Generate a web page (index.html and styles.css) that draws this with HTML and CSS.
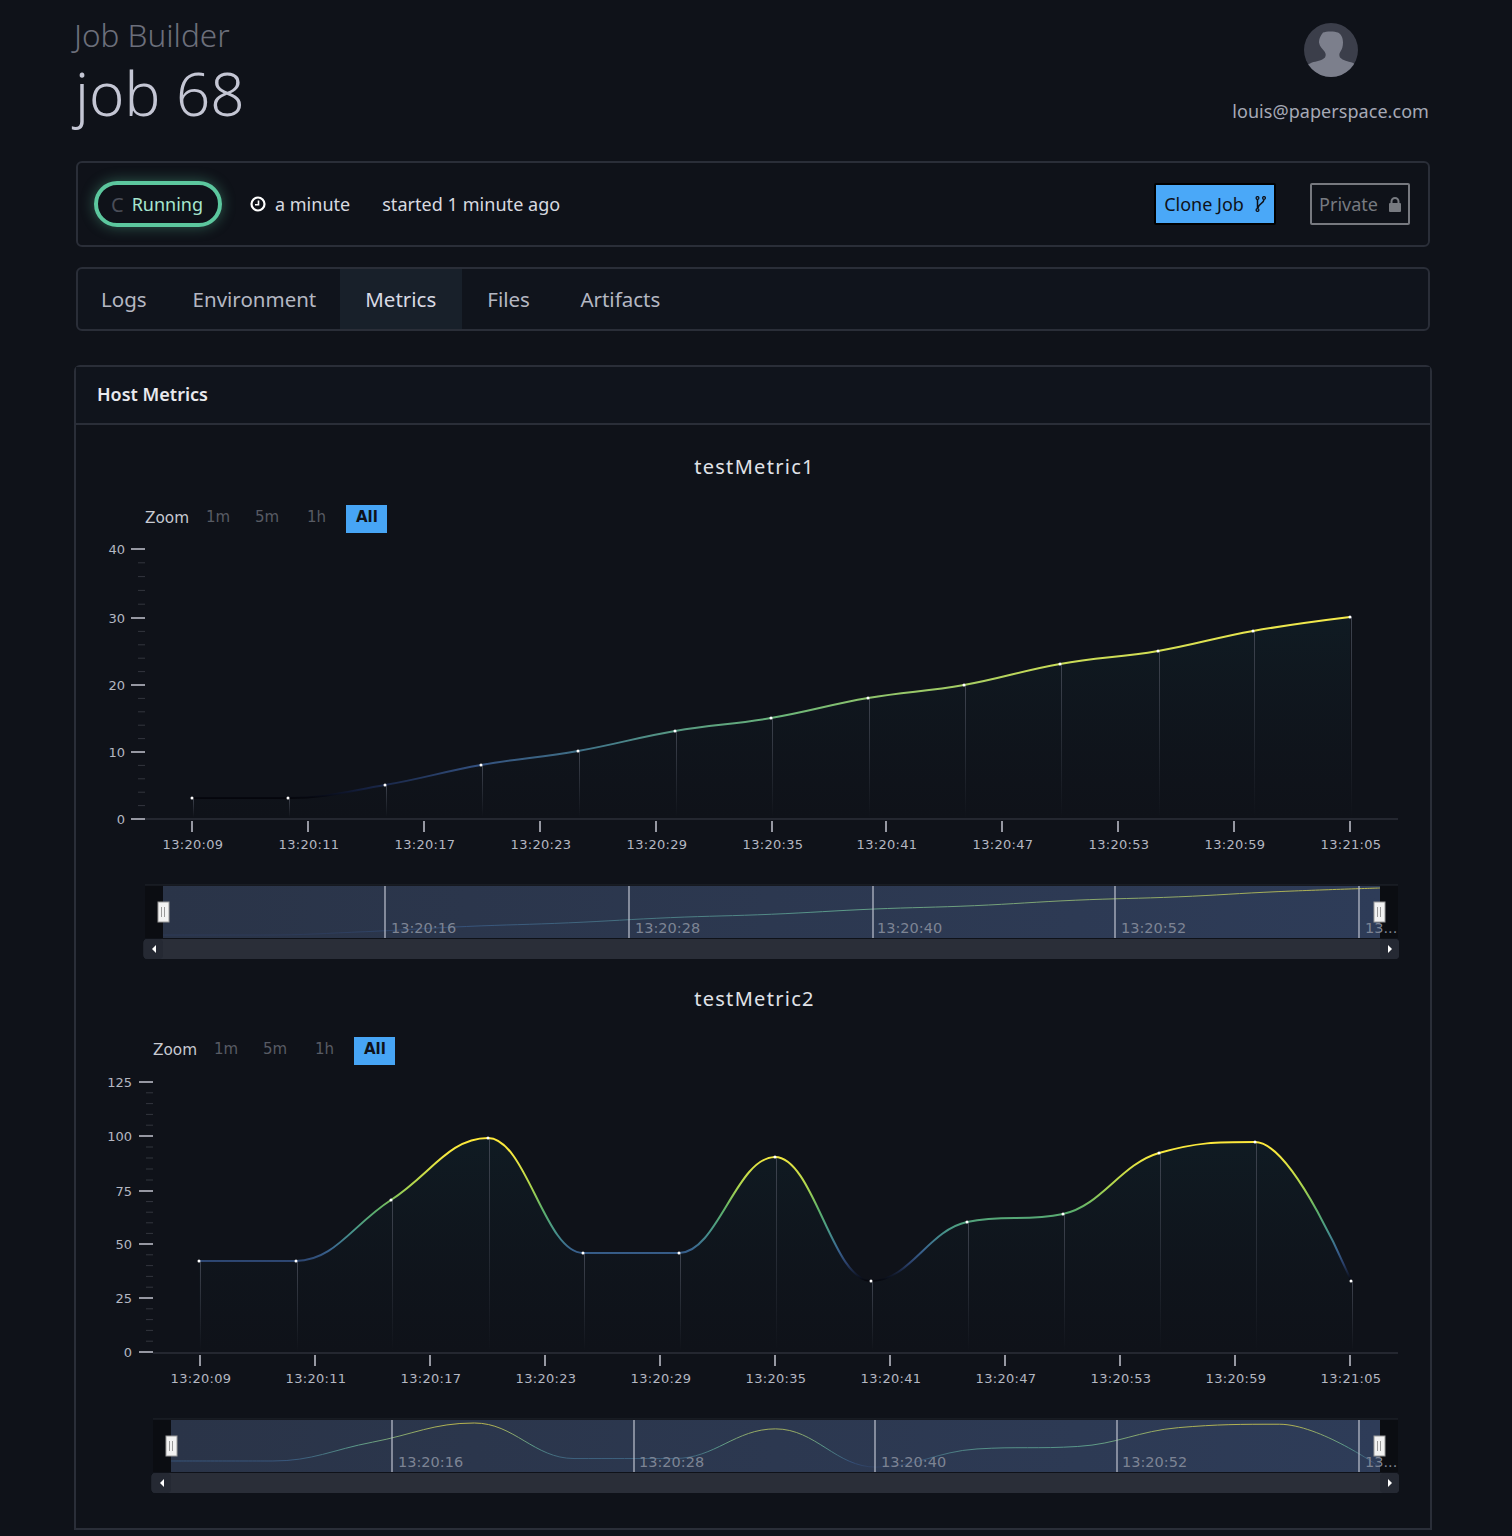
FILE: index.html
```html
<!DOCTYPE html>
<html lang="en">

<head>
    <meta charset="UTF-8">
    <meta name="viewport" content="width=device-width, initial-scale=1.0">
    <title>job 68</title>
    <link rel="stylesheet" href="styles.css">
</head>

<body>
    <div class="page">
        <header class="top">
            <div class="titles">
                <div class="crumb">Job Builder</div>
                <h1 class="job-name">job 68</h1>
            </div>
            <div class="user">
                <svg class="avatar" width="54" height="54" viewBox="0 0 54 54">
                    <defs>
                        <clipPath id="avatarClip">
                            <circle cx="27" cy="27" r="27"></circle>
                        </clipPath>
                    </defs>
                    <circle cx="27" cy="27" r="27" fill="#3b3e4a"></circle>
                    <path clip-path="url(#avatarClip)" fill="#7c7f8c"
                        d="M19 9.500c3-1.500 12-1.500 15 0 3 1.500 5 5 5 10 0 4-1 7-2.500 9-1.500 2-1.500 4-.5 6 3 3 8 4 12 5l4 2v14H4V41.500l4-2c4-1 10-2 13-5 1-2 1-4-.5-6-2-2.500-5-5-5.500-9 0-5 3-8.500 4-10z">
                    </path>
                </svg>
                <div class="user-email">louis@paperspace.com</div>
            </div>
        </header>

        <section class="status-bar">
            <div class="status-left">
                <div class="running-pill"><span class="spinner">C</span>Running</div>
                <div class="duration">
                    <svg width="16" height="16" viewBox="0 0 16 16">
                        <circle cx="8" cy="8" r="6.500" fill="none" stroke="#fff" stroke-width="2.200"></circle>
                        <path d="M8.500 4.500V8.800H5" fill="none" stroke="#fff" stroke-width="1.600"></path>
                    </svg>
                    a minute
                </div>
                <div class="started">started 1 minute ago</div>
            </div>
            <div class="status-right">
                <button class="btn-clone">Clone Job
                    <svg width="11" height="16" viewBox="0 0 11 16">
                        <g fill="none" stroke="#0f1219" stroke-width="1.300">
                            <circle cx="2.500" cy="2" r="1.400"></circle>
                            <circle cx="9" cy="2" r="1.400"></circle>
                            <circle cx="2.500" cy="14" r="1.400"></circle>
                            <path d="M2.500 3.500v9M9 3.500c0 4-5.500 3.500-6 8.500" stroke-width="1.500"></path>
                        </g>
                    </svg>
                </button>
                <button class="btn-private">Private
                    <svg width="12" height="15" viewBox="0 0 12 15">
                        <path fill="#777a80"
                            d="M0 7a1 1 0 0 1 1-1h.5V4.500a4.500 4.500 0 0 1 9 0V6h.5a1 1 0 0 1 1 1v7a1 1 0 0 1-1 1H1a1 1 0 0 1-1-1zM3.500 6h5V4.500a2.500 2.500 0 0 0-5 0z">
                        </path>
                    </svg>
                </button>
            </div>
        </section>

        <nav class="tabs">
            <a class="tab">Logs</a>
            <a class="tab">Environment</a>
            <a class="tab active">Metrics</a>
            <a class="tab">Files</a>
            <a class="tab">Artifacts</a>
        </nav>

        <section class="card">
            <div class="card-head">Host Metrics</div>
            <div class="card-body">
                <h2 class="chart-title">testMetric1</h2>
                <svg id="chart1" class="chart" width="1354" height="487" viewBox="76 490 1354 487"></svg>
                <h2 class="chart-title">testMetric2</h2>
                <svg id="chart2" class="chart" width="1354" height="487" viewBox="76 1022 1354 487"></svg>
            </div>
        </section>
    </div>
    <script src="charts.js"></script>
</body>

</html>
```

FILE: styles.css
```css
* {
    box-sizing: border-box;
}

body {
    font-family: "Noto Sans", sans-serif;
    background-color: #0f1219;
    color: #d8dae0;
    margin: 0;
    padding: 0;
}

.page {
    width: 1512px;
    height: 1536px;
    padding: 0 82px 0 76px;
    overflow: hidden;
}

.top {
    display: flex;
    justify-content: space-between;
    height: 161px;
}

.crumb {
    font-size: 31.500px;
    font-weight: 300;
    line-height: 44px;
    margin-top: 13px;
    margin-left: -2px;
    color: #6c6f7b;
}

.job-name {
    font-size: 60px;
    font-weight: 300;
    line-height: 72px;
    margin: 0 0 0 -1px;
    color: #c4c6d4;
}

.user {
    display: flex;
    flex-direction: column;
    align-items: center;
    margin-right: 1px;
    padding-top: 23px;
}

.user-email {
    font-size: 18px;
    line-height: 24px;
    margin-top: 22px;
    letter-spacing: 0.050px;
    color: #a6a9b6;
}

.status-bar {
    display: flex;
    justify-content: space-between;
    align-items: center;
    height: 86px;
    padding: 0 18px 0 16px;
    border: 2px solid #2a2e38;
    border-radius: 6px;
}

.status-left,
.status-right {
    display: flex;
    align-items: center;
    font-size: 18px;
    color: #d8dae0;
}

.running-pill {
    display: flex;
    align-items: center;
    width: 128px;
    height: 46px;
    padding-left: 13px;
    border: 4px solid #5cc79e;
    border-radius: 23px;
    color: #a8e6cf;
    box-shadow: 0 0 14px rgba(92, 199, 158, 0.4);
}

.spinner {
    font-size: 20px;
    color: #4a4d57;
    margin-right: 8px;
}

.duration {
    display: flex;
    align-items: center;
    gap: 9px;
    margin-left: 28px;
}

.started {
    margin-left: 32px;
    letter-spacing: 0.050px;
}

button {
    display: flex;
    align-items: center;
    justify-content: center;
    font-family: "Noto Sans", sans-serif;
    font-size: 18px;
}

.btn-clone {
    width: 122px;
    height: 42px;
    gap: 11px;
    color: #0f1219;
    background-color: #4aa8f8;
    border: 2px solid #000;
    border-radius: 2px;
}

.btn-private {
    width: 100px;
    height: 42px;
    gap: 11px;
    margin-left: 34px;
    color: #777a80;
    background-color: transparent;
    border: 2px solid #77797f;
    border-radius: 2px;
}

.tabs {
    display: flex;
    height: 64px;
    margin-top: 20px;
    border: 2px solid #2a2e38;
    border-radius: 6px;
    background-color: #10141c;
}

.tab {
    display: flex;
    align-items: center;
    padding: 0 25px;
    font-size: 20.500px;
    color: #b4b7c2;
}

.tab:nth-child(1) {
    padding: 0 23px;
}

.tab:nth-child(2) {
    padding: 0 24px 0 23px;
}

.tab.active {
    padding: 0 26px 0 25px;
    color: #d8dae4;
    background-color: #18202a;
}

.tab:nth-child(4) {
    padding: 0 25.500px 0 25px;
}

.card {
    height: 1165px;
    margin: 34px -2px 0;
    border: 2px solid #2a2e38;
    border-radius: 6px 6px 0 0;
}

.card-head {
    display: flex;
    align-items: center;
    height: 58px;
    padding: 0 0 2px 21px;
    font-size: 18px;
    font-weight: 600;
    color: #e8e9ee;
    background-color: #10141c;
    border-bottom: 2px solid #2a2e38;
}

.card-body {
    padding: 20px 0 0;
}

.chart-title {
    height: 45px;
    margin: 0;
    padding-left: 3px;
    font-size: 20px;
    font-weight: 400;
    line-height: 44px;
    letter-spacing: 1.300px;
    text-align: center;
    color: #e0e2e8;
}

.chart {
    display: block;
}

/* chart bits, the svg is filled from charts.js */
.chart text {
    font-family: "DejaVu Sans", sans-serif;
}

.ax-label {
    font-size: 13px;
    fill: #b4b7c2;
}

.zoom-label {
    font-size: 15.300px;
    fill: #c8cad2;
}

.zoom-opt {
    font-size: 15px;
    fill: #585b64;
}

.zoom-all {
    font-size: 15px;
    font-weight: 700;
    fill: #0f1219;
}

.nav-label {
    font-size: 14.500px;
    fill: #7d8494;
}

.tick-major {
    stroke: #c4c6d0;
    stroke-width: 1.500;
}

.tick-minor {
    stroke: #33363e;
    stroke-width: 1;
}

.axis-line {
    stroke: #2c2f38;
    stroke-width: 1.500;
}

.nav-line {
    stroke: #c0c4d0;
    stroke-width: 1.200;
}
```

FILE: charts.js
```js
const NS = "http://www.w3.org/2000/svg";

function el(parent, name, attrs, text) {
    const node = document.createElementNS(NS, name);
    for (const key in attrs) {
        node.setAttribute(key, attrs[key]);
    }
    if (text !== undefined) {
        node.textContent = text;
    }
    parent.appendChild(node);
    return node;
}

// same smoothing as a highcharts spline, flat at the peaks
function splinePath(points) {
    const ctrl = points.map(function (p, i) {
        if (i === 0 || i === points.length - 1) {
            return { lx: p[0], ly: p[1], rx: p[0], ry: p[1] };
        }
        const a = points[i - 1];
        const b = points[i + 1];
        const lx = (1.5 * p[0] + a[0]) / 2.5;
        const rx = (1.5 * p[0] + b[0]) / 2.5;
        let ly = (1.5 * p[1] + a[1]) / 2.5;
        let ry = (1.5 * p[1] + b[1]) / 2.5;
        const fix = ((ry - ly) * (rx - p[0])) / (rx - lx) + p[1] - ry;
        ly += fix;
        ry += fix;
        if ((ly > a[1] && ly > p[1]) || (ly < a[1] && ly < p[1])) {
            ly = ly > p[1] ? Math.max(a[1], p[1]) : Math.min(a[1], p[1]);
            ry = 2 * p[1] - ly;
        }
        if ((ry > b[1] && ry > p[1]) || (ry < b[1] && ry < p[1])) {
            ry = ry > p[1] ? Math.max(b[1], p[1]) : Math.min(b[1], p[1]);
            ly = 2 * p[1] - ry;
        }
        return { lx: lx, ly: ly, rx: rx, ry: ry };
    });
    let d = "M" + points[0][0] + " " + points[0][1];
    for (let i = 1; i < points.length; i++) {
        const c1 = ctrl[i - 1];
        const c2 = ctrl[i];
        d += " C" + c1.rx + " " + c1.ry + " " + c2.lx + " " + c2.ly + " " + points[i][0] + " " + points[i][1];
    }
    return d;
}

function gradient(defs, id, y1, y2, stops) {
    const g = el(defs, "linearGradient", { id: id, gradientUnits: "userSpaceOnUse", x1: 0, x2: 0, y1: y1, y2: y2 });
    stops.forEach(function (s) {
        el(g, "stop", { offset: s[0], "stop-color": s[1], "stop-opacity": s[2] === undefined ? 1 : s[2] });
    });
}

function drawChart(svg, cfg) {
    const defs = el(svg, "defs", {});
    const id = svg.id;
    const left = cfg.left;
    const right = 1398;
    const axisY = cfg.axisY;

    gradient(defs, id + "Line", cfg.lineTop, cfg.lineBottom, cfg.lineStops);
    gradient(defs, id + "Area", cfg.lineTop, axisY, [[0, "#12303a", 0.3], [1, "#10202a", 0]]);
    const drop = el(defs, "linearGradient", { id: id + "Drop", x1: 0, x2: 0, y1: 0, y2: 1 });
    el(drop, "stop", { offset: 0, "stop-color": "#474c58", "stop-opacity": 0.85 });
    el(drop, "stop", { offset: 1, "stop-color": "#474c58", "stop-opacity": 0 });
    const navFill = el(defs, "linearGradient", { id: id + "Nav", x1: 0, x2: 1, y1: 0, y2: 0 });
    el(navFill, "stop", { offset: 0, "stop-color": "#2a3448" });
    el(navFill, "stop", { offset: 1, "stop-color": "#2e3c58" });

    // zoom row
    el(svg, "text", { class: "zoom-label", x: left, y: cfg.zoomY }, "Zoom");
    cfg.zoomOpts.forEach(function (o) {
        el(svg, "text", { class: "zoom-opt", x: o[1], y: cfg.zoomY - 1 }, o[0]);
    });
    el(svg, "rect", { x: cfg.allX, y: cfg.zoomY - 18, width: 41, height: 28, fill: "#47a5f5" });
    el(svg, "text", { class: "zoom-all", x: cfg.allX + 10, y: cfg.zoomY - 1 }, "All");

    // y axis
    const yt = cfg.yTicks;
    yt.forEach(function (t, i) {
        el(svg, "text", { class: "ax-label", x: cfg.labelRight, y: t[1] + 4.5, "text-anchor": "end" }, t[0]);
        el(svg, "line", { class: "tick-major", x1: left - 14, x2: left, y1: t[1], y2: t[1] });
        if (i < yt.length - 1) {
            const step = (yt[i + 1][1] - t[1]) / (cfg.minors + 1);
            for (let m = 1; m <= cfg.minors; m++) {
                const my = t[1] + step * m;
                el(svg, "line", { class: "tick-minor", x1: left - 7, x2: left, y1: my, y2: my });
            }
        }
    });

    // x axis
    el(svg, "line", { class: "axis-line", x1: left, x2: right, y1: axisY, y2: axisY });
    cfg.xTicks.forEach(function (x, i) {
        el(svg, "line", { class: "tick-major", x1: x, x2: x, y1: axisY + 2, y2: axisY + 13 });
        el(svg, "text", { class: "ax-label", x: x + 1, y: axisY + 30, "text-anchor": "middle", "letter-spacing": 0.3 }, cfg.xLabels[i]);
    });

    // series
    const pts = cfg.points;
    const d = splinePath(pts);
    const last = pts[pts.length - 1];
    el(svg, "path", { d: d + " L" + last[0] + " " + axisY + " L" + pts[0][0] + " " + axisY + " Z", fill: "url(#" + id + "Area)" });
    pts.forEach(function (p) {
        el(svg, "rect", { x: p[0] + 1, y: p[1], width: 1, height: axisY - p[1] - 2, fill: "url(#" + id + "Drop)" });
    });
    el(svg, "path", { d: d, fill: "none", stroke: "url(#" + id + "Line)", "stroke-width": 2 });
    pts.forEach(function (p) {
        el(svg, "circle", { cx: p[0], cy: p[1], r: 1.5, fill: "#fff" });
    });

    // navigator
    const navTop = cfg.navTop;
    const navLeft = cfg.navLeft;
    const navRight = 1380;
    el(svg, "rect", { x: left, y: navTop, width: right - left, height: 53, fill: "#0b0d12" });
    el(svg, "line", { x1: left, x2: right, y1: navTop, y2: navTop, stroke: "#23262e" });
    el(svg, "rect", { x: navLeft, y: navTop + 1, width: navRight - navLeft, height: 52, fill: "url(#" + id + "Nav)" });
    const scaleX = (navRight - navLeft) / (last[0] - pts[0][0]);
    const navPts = pts.map(function (p) {
        return [navLeft + (p[0] - pts[0][0]) * scaleX, cfg.navY0 + (p[1] - cfg.navSrcY) * cfg.navScale];
    });
    gradient(defs, id + "NavLine", cfg.navY0, cfg.navY0 + 46, [[0, "#b8b44e"], [0.5, "#5a9a8a"], [0.85, "#35507a"], [1, "#2c3a58"]]);
    el(svg, "path", { d: splinePath(navPts), fill: "none", stroke: "url(#" + id + "NavLine)", "stroke-width": 1 });
    cfg.navTicks.forEach(function (t) {
        el(svg, "line", { class: "nav-line", x1: t[0], x2: t[0], y1: navTop + 1, y2: navTop + 53 });
        el(svg, "text", { class: "nav-label", x: t[0] + (t[2] || 6), y: navTop + 48 }, t[1]);
    });

    // scrollbar
    const barY = navTop + 54;
    const barLeft = left - 1.5;
    const barRight = right + 1;
    el(svg, "rect", { x: barLeft, y: barY, width: barRight - barLeft, height: 20, rx: 4, fill: "#2a2e38" });
    el(svg, "rect", { x: barLeft, y: barY, width: navLeft - barLeft, height: 20, rx: 4, fill: "#252933" });
    el(svg, "rect", { x: navRight, y: barY, width: barRight - navRight, height: 20, rx: 4, fill: "#252933" });
    const midY = barY + 10;
    el(svg, "path", { d: "M" + (navLeft - 11) + " " + midY + " l4 -4 v8 z", fill: "#fff" });
    el(svg, "path", { d: "M" + (navRight + 8) + " " + (midY - 4) + " l4 4 -4 4 z", fill: "#fff" });

    // handles go over the labels
    [navLeft, navRight - 1].forEach(function (x) {
        el(svg, "rect", { x: x - 5, y: navTop + 17, width: 11, height: 20, fill: "#f2f2f2", stroke: "#9a9a9a" });
        el(svg, "line", { x1: x - 1.500, x2: x - 1.500, y1: navTop + 22, y2: navTop + 32, stroke: "#999" });
        el(svg, "line", { x1: x + 1.500, x2: x + 1.500, y1: navTop + 22, y2: navTop + 32, stroke: "#999" });
    });
}

const times = ["13:20:09", "13:20:11", "13:20:17", "13:20:23", "13:20:29", "13:20:35", "13:20:41", "13:20:47", "13:20:53", "13:20:59", "13:21:05"];

drawChart(document.getElementById("chart1"), {
    left: 145,
    axisY: 819,
    zoomY: 523,
    allX: 346,
    labelRight: 125,
    minors: 4,
    zoomOpts: [["1m", 206], ["5m", 255], ["1h", 307]],
    yTicks: [["40", 549], ["30", 618], ["20", 685], ["10", 752], ["0", 819]],
    xTicks: [192, 308, 424, 540, 656, 772, 886, 1002, 1118, 1234, 1350],
    xLabels: times,
    points: [[192, 798], [288, 798], [385, 785], [481, 765], [578, 751], [675, 731], [771, 718], [868, 698], [964, 685], [1060, 664], [1158, 651], [1253, 631], [1350, 617]],
    lineTop: 617,
    lineBottom: 798,
    lineStops: [[0, "#f5ea4a"], [0.3, "#c0d85a"], [0.55, "#6ab57a"], [0.7, "#47808a"], [0.82, "#33507f"], [0.95, "#15203f"], [1, "#05060c"]],
    navTop: 885,
    navLeft: 163,
    navY0: 888,
    navSrcY: 617,
    navScale: 0.26,
    navTicks: [[385, "13:20:16"], [629, "13:20:28"], [873, "13:20:40", 4], [1115, "13:20:52"], [1359, "13..."]]
});

drawChart(document.getElementById("chart2"), {
    left: 153,
    axisY: 1353,
    zoomY: 1055,
    allX: 354,
    labelRight: 132,
    minors: 4,
    zoomOpts: [["1m", 214], ["5m", 263], ["1h", 315]],
    yTicks: [["125", 1082], ["100", 1136], ["75", 1191], ["50", 1244], ["25", 1298], ["0", 1352]],
    xTicks: [200, 315, 430, 545, 660, 775, 890, 1005, 1120, 1235, 1350],
    xLabels: times,
    points: [[199, 1261], [296, 1261], [391, 1200], [488, 1138], [583, 1253], [679, 1253], [775, 1157], [871, 1281], [967, 1222], [1063, 1214], [1159, 1153], [1255, 1142], [1351, 1281]],
    lineTop: 1138,
    lineBottom: 1281,
    lineStops: [[0, "#ffe93a"], [0.12, "#f5e83f"], [0.35, "#a8d44f"], [0.5, "#5fb26a"], [0.65, "#48968a"], [0.78, "#3a6590"], [0.88, "#2a3f6a"], [1, "#05060c"]],
    navTop: 1419,
    navLeft: 171,
    navY0: 1423,
    navSrcY: 1138,
    navScale: 0.309,
    navTicks: [[392, "13:20:16"], [634, "13:20:28", 5], [875, "13:20:40"], [1117, "13:20:52", 5], [1359, "13..."]]
});
```
